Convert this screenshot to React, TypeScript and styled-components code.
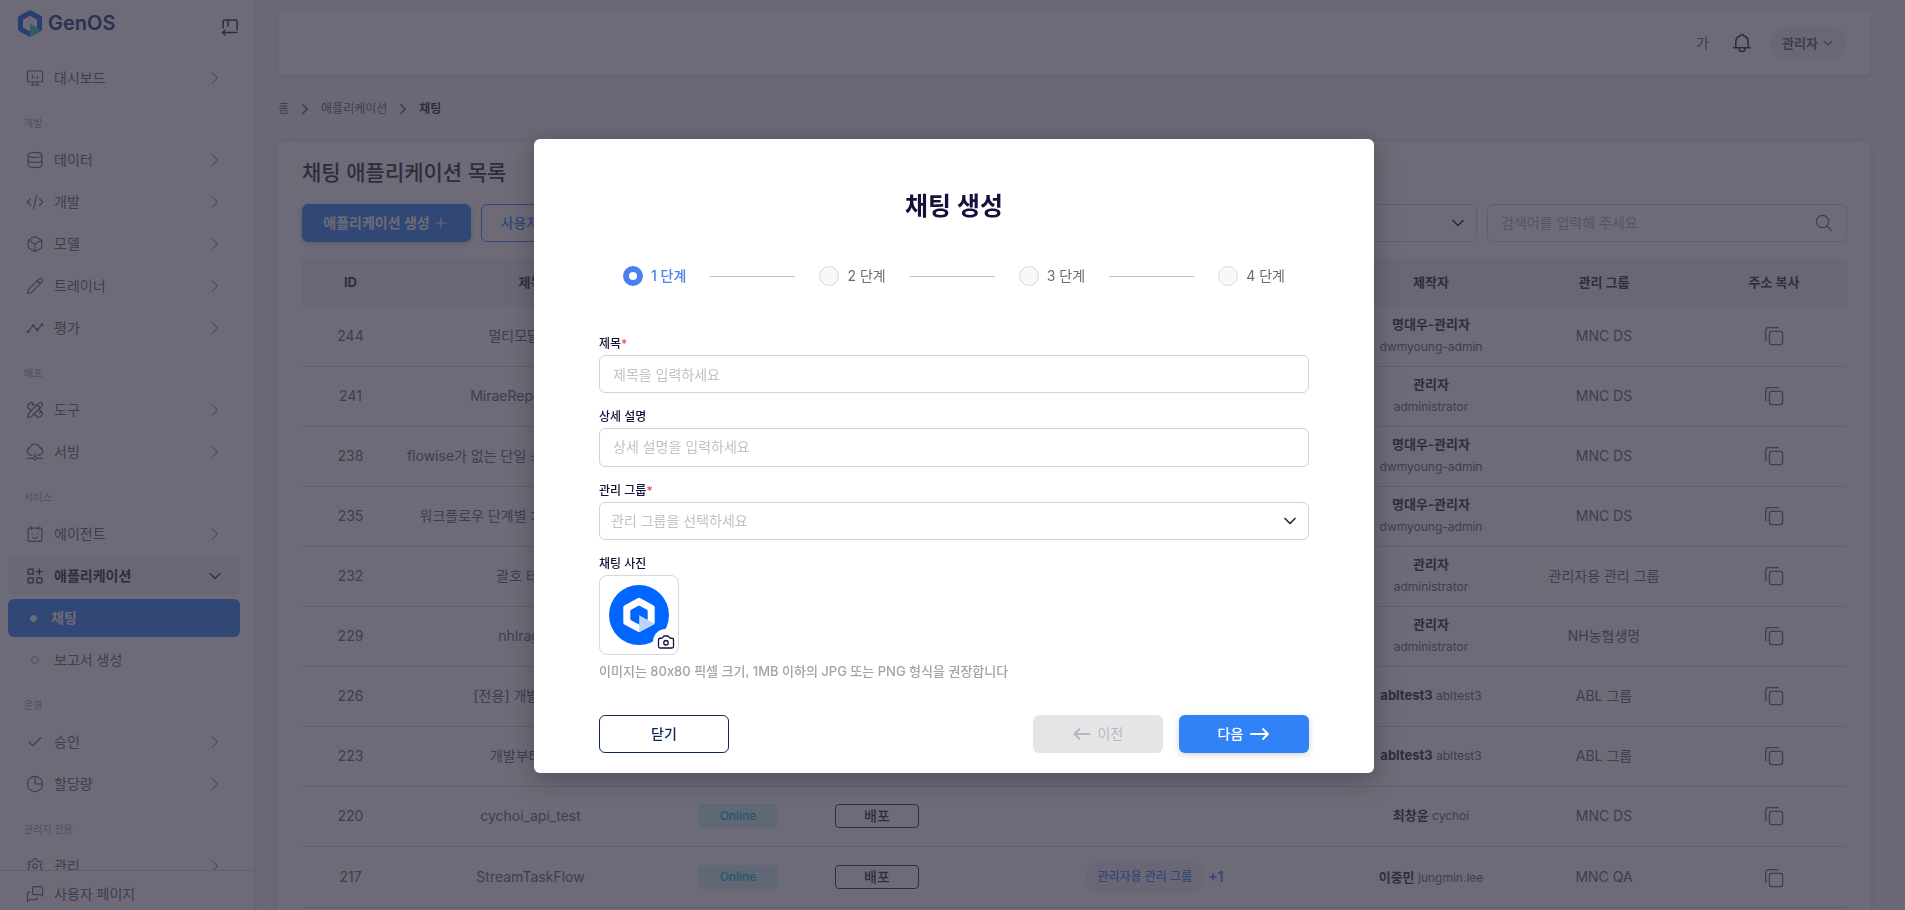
import React from "react";
import styled, { createGlobalStyle, css } from "styled-components";
import { Box, Camera, Check, ChevronDown, ChevronRight, Pencil, PencilRuler, Plus, Settings } from "lucide-react";

const color = {
  page: "#f6f5f8",
  surface: "#ffffff",
  text: "#63616f",
  strong: "#2b283c",
  muted: "#a09eab",
  line: "#d9d8dd",
  blue: "#3182f6",
  navy: "#14123a",
};

const GlobalStyle = createGlobalStyle`
  *, *::before, *::after { box-sizing: border-box; }
  body {
    margin: 0;
    background: ${color.page};
    color: ${color.text};
    font-family: Inter, "Noto Sans CJK KR", sans-serif;
    font-size: 14px;
    line-height: 20px;
  }
  button, input, select, textarea { font: inherit; color: inherit; margin: 0; }
  h1, h2, p, ul { margin: 0; padding: 0; }
  a { color: inherit; text-decoration: none; }
`;

/* ---------- shell ---------- */

const Shell = styled.div`
  display: flex;
  height: 100vh;
  overflow: hidden;
`;

const Sidebar = styled.aside`
  flex: 0 0 254px;
  display: flex;
  flex-direction: column;
  background: ${color.surface};
  box-shadow: 0 2px 6px rgba(47, 43, 61, 0.16);
`;

const Brand = styled.div`
  display: flex;
  align-items: flex-start;
  justify-content: space-between;
  height: 59px;
  flex: none;
  padding: 10px 15px 0 18px;
`;

const BrandLink = styled.a`
  display: flex;
  align-items: center;
  gap: 6px;
  font-size: 20px;
  line-height: 27px;
  font-weight: 600;
  color: #1d3766;
`;

const IconButton = styled.button`
  display: inline-flex;
  align-items: center;
  justify-content: center;
  padding: 0;
  border: 0;
  background: none;
  vertical-align: middle;
  cursor: pointer;
`;

const CollapseButton = styled(IconButton)`
  width: 18px;
  height: 18px;
  margin-top: 8px;
  color: ${color.strong};
`;

const Nav = styled.nav`
  flex: 1;
  min-height: 0;
  overflow: hidden;
  padding: 0 14px 0 8px;
`;

const NavList = styled.ul`
  display: flex;
  flex-direction: column;
  gap: 4px;
  list-style: none;
`;

const SectionLabel = styled.p`
  height: 44px;
  padding: 16px 16px 0;
  font-size: 10px;
  line-height: 20px;
  color: ${color.muted};
`;

const NavLink = styled.a<{ $state?: "open" | "current" }>`
  display: flex;
  align-items: center;
  height: 38px;
  padding: 0 15px 0 18px;
  border-radius: 6px;
  ${(p) => p.$state === "open" && css`
    background: #f1f1f3;
    color: ${color.strong};
    font-weight: 600;
  `}
  ${(p) => p.$state === "current" && css`
    background: ${color.blue};
    color: #fff;
    font-weight: 600;
  `}
`;

const NavIcon = styled.span<{ $tight?: boolean }>`
  display: inline-flex;
  justify-content: center;
  width: 18px;
  margin-right: ${(p) => (p.$tight ? "7px" : "10px")};
`;

const NavText = styled.span`
  flex: 1;
`;

const Bullet = styled.span<{ $filled?: boolean }>`
  width: ${(p) => (p.$filled ? "7px" : "8px")};
  height: ${(p) => (p.$filled ? "7px" : "8px")};
  margin-right: ${(p) => (p.$filled ? "3px" : "0")};
  border-radius: 50%;
  border: 1px solid ${(p) => (p.$filled ? "#fff" : color.muted)};
  background: ${(p) => (p.$filled ? "#fff" : "none")};
`;

const SidebarFooter = styled.div`
  flex: none;
  height: 40px;
  padding: 4px 14px 0 8px;
  border-top: 1px solid ${color.line};
`;

const Main = styled.main`
  flex: 1;
  min-width: 0;
  padding: 11px 34px 0 24px;
  display: flex;
  flex-direction: column;
`;

const TopBar = styled.header`
  flex: none;
  display: flex;
  align-items: center;
  justify-content: flex-end;
  height: 64px;
  padding: 0 24px;
  border-radius: 6px;
  background: ${color.surface};
  box-shadow: 0 2px 6px rgba(47, 43, 61, 0.12);
`;

const LanguageButton = styled(IconButton)`
  color: ${color.text};
  margin-right: 23px;
`;

const BellButton = styled(IconButton)`
  color: #1b2a5c;
  margin-right: 18px;
`;

const UserButton = styled.button`
  display: flex;
  align-items: center;
  justify-content: space-between;
  width: 77px;
  height: 32px;
  padding: 0 11px 0 12px;
  border: 0;
  border-radius: 16px;
  background: #f1f1f3;
  font-size: 13px;
  font-weight: 600;
  color: ${color.text};
`;

const Breadcrumb = styled.nav`
  flex: none;
  display: flex;
  align-items: center;
  gap: 7px;
  height: 67px;
  font-size: 12px;
  b { color: ${color.strong}; font-weight: 700; }
`;

const Panel = styled.section`
  flex: none;
  padding: 16px 24px 40px;
  border-radius: 6px;
  background: ${color.surface};
  box-shadow: 0 3px 12px rgba(47, 43, 61, 0.12);
`;

const PanelTitle = styled.h1`
  font-size: 21px;
  line-height: 30px;
  font-weight: 500;
  color: ${color.strong};
`;

const Toolbar = styled.div`
  display: flex;
  align-items: flex-start;
  gap: 10px;
  margin: 16px 0;
`;

const ToolbarButton = styled.button<{ $outline?: boolean }>`
  display: flex;
  align-items: center;
  justify-content: center;
  height: 38px;
  min-width: ${(p) => (p.$outline ? "150px" : "169px")};
  border-radius: 6px;
  border: 1px solid ${color.blue};
  background: ${(p) => (p.$outline ? "transparent" : color.blue)};
  color: ${(p) => (p.$outline ? color.blue : "#fff")};
  font-weight: ${(p) => (p.$outline ? 500 : 700)};
  box-shadow: ${(p) => (p.$outline ? "none" : "0 2px 6px rgba(47, 43, 61, 0.3)")};
  gap: 2px;
`;

const SelectBox = styled.div<{ $width?: string }>`
  position: relative;
  width: ${(p) => p.$width ?? "100%"};
  > svg {
    position: absolute;
    right: 9px;
    top: 9px;
    pointer-events: none;
    color: ${color.strong};
  }
`;

const Select = styled.select`
  display: block;
  appearance: none;
  width: 100%;
  height: 38px;
  padding: 0 32px 0 11px;
  border: 1px solid #d3d3d6;
  border-radius: 6px;
  background: transparent;
  color: #c2c1c8;
`;

const SearchBox = styled.form`
  display: flex;
  align-items: center;
  width: 360px;
  height: 38px;
  padding: 0 13px;
  border: 1px solid #d3d3d6;
  border-radius: 6px;
`;

const SearchInput = styled.input`
  flex: 1;
  min-width: 0;
  border: 0;
  padding: 0;
  background: none;
  outline: none;
  &::placeholder { color: #b1b0b9; opacity: 1; }
`;

const Spacer = styled.div`
  flex: 1;
`;

/* ---------- table ---------- */

const Table = styled.table`
  width: 100%;
  margin-top: 17px;
  table-layout: fixed;
  border-collapse: separate;
  border-spacing: 0;
  text-align: center;
  th {
    height: 48px;
    padding: 0 0 2px;
    background: #f1f1f4;
    font-size: 13px;
    font-weight: 700;
    color: ${color.strong};
  }
  td {
    height: 60px;
    padding: 0 0 2px;
    border-bottom: 1px solid ${color.line};
    white-space: nowrap;
  }
  tr:last-child td { height: 61px; padding: 0; }
`;

const Person = styled.div`
  padding: 0 23px;
  line-height: 22px;
  font-size: 12px;
  white-space: normal;
  b { font-size: 13px; font-weight: 700; color: ${color.strong}; white-space: nowrap; }
  span { white-space: nowrap; }
`;

const StatusBadge = styled.span`
  display: inline-block;
  width: 80px;
  border-radius: 4px;
  background: #d2f1f8;
  color: #04b9d2;
  font-size: 12px;
  line-height: 24px;
  font-weight: 500;
  vertical-align: middle;
`;

const DeployButton = styled.button`
  width: 84px;
  height: 24px;
  padding: 0;
  line-height: 20px;
  border: 1px solid ${color.strong};
  border-radius: 4px;
  background: none;
  color: ${color.strong};
  font-weight: 500;
  vertical-align: middle;
`;

const GroupCell = styled.div`
  display: flex;
  align-items: center;
  justify-content: center;
  gap: 4px;
  padding-left: 14px;
  color: ${color.blue};
  b { font-weight: 600; }
`;

const GroupChip = styled.span`
  padding: 0 12px;
  border-radius: 16px;
  background: #eff0f6;
  font-size: 12px;
  line-height: 32px;
  font-weight: 500;
`;

/* ---------- dialog ---------- */

const Backdrop = styled.div`
  position: fixed;
  inset: 0;
  display: flex;
  align-items: center;
  justify-content: center;
  padding: 2px 0 0 3px;
  background: rgba(50, 46, 64, 0.71);
`;

const Dialog = styled.form`
  width: 840px;
  max-width: 100%;
  padding: 49px 65px 20px;
  border-radius: 6px;
  background: #fff;
  box-shadow: 0 6px 26px rgba(20, 16, 34, 0.32);
`;

const DialogTitle = styled.h2`
  font-size: 25px;
  line-height: 36px;
  font-weight: 700;
  text-align: center;
  color: ${color.navy};
`;

const Steps = styled.ol`
  display: flex;
  align-items: center;
  gap: 24px;
  margin: 42px 0 49px;
  padding: 0 24px;
  list-style: none;
`;

const Step = styled.li<{ $active?: boolean }>`
  display: flex;
  align-items: center;
  gap: 8px;
  color: ${(p) => (p.$active ? "#4880ee" : "#6d6b77")};
  font-weight: ${(p) => (p.$active ? 500 : 400)};
  white-space: nowrap;
  &::before {
    content: "";
    width: 20px;
    height: 20px;
    border-radius: 50%;
    background: ${(p) => (p.$active ? "#fff" : "#f7f8fa")};
    border: ${(p) => (p.$active ? "6px solid #4880ee" : "1px solid #d3d8de")};
  }
`;

const StepLine = styled.li`
  flex: 1;
  height: 1px;
  background: #bdbdc0;
`;

const Fields = styled.div`
  display: flex;
  flex-direction: column;
  gap: 15px;
`;

const Field = styled.div`
  display: flex;
  flex-direction: column;
  gap: 2px;
`;

const Label = styled.label`
  font-size: 12px;
  line-height: 18px;
  font-weight: 500;
  color: ${color.navy};
  span { color: #ee4b4e; }
`;

const inputStyle = css`
  display: block;
  width: 100%;
  border: 1px solid #d3d3d6;
  border-radius: 6px;
  background: #fff;
  outline: none;
  color: ${color.strong};
  &::placeholder { color: #c2c1c8; opacity: 1; }
`;

const TextInput = styled.input`
  ${inputStyle}
  height: 38px;
  padding: 0 13px;
`;

const TextArea = styled.textarea`
  ${inputStyle}
  height: 39px;
  padding: 8px 13px;
  resize: none;
  overflow: hidden;
`;

const PhotoButton = styled.button`
  position: relative;
  display: flex;
  align-items: center;
  justify-content: center;
  width: 80px;
  height: 80px;
  padding: 0;
  border: 1px solid #d9d9dc;
  border-radius: 8px;
  background: #fff;
`;

const CameraBadge = styled.span`
  position: absolute;
  right: 0;
  bottom: 0;
  display: flex;
  align-items: center;
  justify-content: center;
  width: 25px;
  height: 25px;
  border-radius: 50%;
  background: #fff;
  color: ${color.navy};
`;

const Hint = styled.p`
  font-size: 13px;
  line-height: 20px;
  margin: 6px 0 34px;
  font-weight: 500;
  color: #a3a2ab;
`;

const Actions = styled.div`
  display: flex;
  gap: 16px;
`;

const ActionButton = styled.button<{ $kind: "outline" | "muted" | "primary" }>`
  display: flex;
  align-items: center;
  justify-content: center;
  gap: 7px;
  width: 130px;
  height: 38px;
  padding: 0;
  border-radius: 6px;
  font-weight: 500;
  ${(p) => p.$kind === "outline" && css`
    border: 1px solid #0c2a52;
    background: #fff;
    color: #0c2a52;
    margin-right: auto;
  `}
  ${(p) => p.$kind === "muted" && css`
    border: 0;
    background: #e5e5e7;
    color: #b7b6bc;
    font-weight: 400;
  `}
  ${(p) => p.$kind === "primary" && css`
    border: 0;
    background: ${color.blue};
    color: #fff;
    box-shadow: 0 2px 6px rgba(47, 43, 61, 0.2);
  `}
`;

/* ---------- drawings ---------- */

const Glyph = ({ children, size = 20, width = 1.3 }: { children: React.ReactNode; size?: number; width?: number }) => (
  <svg width={size} height={size} viewBox="0 0 20 20" fill="none" stroke="currentColor" strokeWidth={width} strokeLinecap="round" strokeLinejoin="round" aria-hidden="true">
    {children}
  </svg>
);

const MonitorGlyph = () => (
  <Glyph>
    <rect x="1.6" y="2.2" width="16.8" height="12.2" rx="1.4" />
    <path d="M7.6 14.6v3M12.4 14.6v3M5.6 17.8h8.8M7.2 6.6v3.6M10 9.4v.8M12.8 8.4v1.8" />
  </Glyph>
);
const DatabaseGlyph = () => (
  <Glyph>
    <ellipse cx="10" cy="4.4" rx="7.6" ry="2.8" />
    <path d="M2.4 4.4v11.2c0 1.6 3.4 2.8 7.6 2.8s7.6-1.2 7.6-2.8V4.4M2.4 10c0 1.6 3.4 2.8 7.6 2.8s7.6-1.2 7.6-2.8" />
  </Glyph>
);
const CodeGlyph = () => (
  <Glyph>
    <path d="M5.2 6.2 1.4 10l3.8 3.8M14.8 6.2l3.8 3.8-3.8 3.8M11.8 2.8 8.4 17.4" />
  </Glyph>
);
const TrendGlyph = () => (
  <Glyph>
    <path d="M2.4 14 8 7.4l4.6 4.8 5.2-6" />
    <g fill="currentColor" stroke="none">
      <circle cx="2.4" cy="14" r="1.6" />
      <circle cx="8" cy="7.4" r="1.6" />
      <circle cx="12.6" cy="12.2" r="1.6" />
      <circle cx="17.8" cy="6.2" r="1.6" />
    </g>
  </Glyph>
);
const CloudGlyph = () => (
  <Glyph>
    <path d="M5 13.4a4.2 4.2 0 0 1-.4-8.2 5.6 5.6 0 0 1 10.8 0 4.2 4.2 0 0 1-.4 8.2h-2M5 13.4h2M10 11.6v3M1.600 17h6.6M11.8 17h6.6" />
    <circle cx="10" cy="17" r="1.7" />
  </Glyph>
);
const AgentGlyph = () => (
  <Glyph>
    <rect x="2.4" y="3.4" width="15.2" height="14.8" rx="1.2" />
    <path d="M6.2 1.4v3.8M13.8 1.4v3.8M7.4 13.6c1.4 1.2 3.8 1.2 5.2 0M7 9.2v.6M13 9.2v.6" />
  </Glyph>
);
const AppsGlyph = () => (
  <Glyph width={1.4}>
    <rect x="2.4" y="2.4" width="5.6" height="5.6" rx=".6" />
    <rect x="2.4" y="12" width="5.6" height="5.6" rx=".6" />
    <rect x="12" y="12" width="5.6" height="5.6" rx=".6" />
    <path d="M14.8 2v6.4M11.6 5.2H18" />
  </Glyph>
);
const PieGlyph = () => (
  <Glyph>
    <circle cx="10" cy="10" r="8.4" />
    <path d="M10 1.6V10h8.4" />
  </Glyph>
);
const BubblesGlyph = () => (
  <Glyph>
    <path d="M8.6 1.8h8.6c.8 0 1.2.4 1.2 1.2v9.4l-2.4-1.8H8.6c-.8 0-1.2-.4-1.2-1.2V3c0-.8.4-1.2 1.2-1.2z" />
    <path d="M4.6 8H2.8c-.8 0-1.2.4-1.2 1.2v9.2L4 16.2h7.2c.8 0 1.2-.4 1.2-1.2v-1" />
  </Glyph>
);
const CopyGlyph = () => (
  <Glyph width={1.3}>
    <rect x="5.400" y="5.400" width="13.200" height="13.200" rx="2.400" />
    <path d="M1.700 14.400V4.200a2.500 2.500 0 0 1 2.500-2.500h10.200" />
  </Glyph>
);
const CollapseGlyph = () => (
  <Glyph size={18} width={1.7}>
    <path d="M2.4 11V3.6c0-.8.5-1.4 1.4-1.4h12.6c.9 0 1.4.6 1.4 1.4V13M8 2.2V9M17.8 16.2H2M4.4 13.6 1.8 16.2l2.6 2.6" />
  </Glyph>
);
const BellGlyph = () => (
  <Glyph size={20} width={1.5}>
    <path d="M1.8 14.8h16.4M3.8 14.6V9.2c0-3.4 1.8-5.6 4.4-6.2.2-1 .8-1.6 1.8-1.6s1.600.6 1.800 1.600c2.6.6 4.4 2.8 4.4 6.2v5.4M7 15v.8c0 1.6 1.4 2.8 3 2.8s3-1.2 3-2.8V15" />
  </Glyph>
);
const SearchGlyph = () => (
  <Glyph size={18} width={1.3}>
    <circle cx="8.4" cy="8.4" r="6.8" />
    <path d="m13.4 13.4 5 5" />
  </Glyph>
);
const ArrowGlyph = ({ left }: { left?: boolean }) => (
  <svg width={left ? 18 : 20} height="14" viewBox={left ? "0 0 18 14" : "0 0 20 14"} fill="none" stroke="currentColor" strokeWidth="1.8" strokeLinecap="round" strokeLinejoin="round" aria-hidden="true">
    {left ? <path d="M16.500 7H1.500M6.500 2l-5 5 5 5" /> : <path d="M1 7h17M13 2l5 5-5 5" />}
  </svg>
);
const LogoMark = () => (
  <svg width="24" height="27" viewBox="0 0 24 27" aria-hidden="true">
    <path fill="#1d63f0" fillRule="evenodd" d="M10.8.4a2.4 2.4 0 0 1 2.4 0l9.6 5.4A2.4 2.4 0 0 1 24 7.9v11.2a2.4 2.4 0 0 1-1.2 2.1l-9.6 5.4a2.4 2.4 0 0 1-2.4 0l-9.6-5.4A2.4 2.4 0 0 1 0 19.1V7.9a2.4 2.4 0 0 1 1.2-2.1zM12 5.8 5 9.7v7.8l7 4 7-4V9.7z" />
    <path fill="#42c3c4" d="M12 13.6 23.4 20.6 12 27z" />
  </svg>
);
const AvatarMark = () => (
  <svg width="60" height="60" viewBox="0 0 60 60" aria-hidden="true">
    <circle cx="30" cy="30" r="30" fill="#0066ff" />
    <path fill="#fff" fillRule="evenodd" d="M29 13.1a2 2 0 0 1 2 0l13.700 7.500a2 2 0 0 1 1 1.700v15.400a2 2 0 0 1-1 1.700L31 46.800a2 2 0 0 1-2 0l-13.700-7.400a2 2 0 0 1-1-1.700V22.300a2 2 0 0 1 1-1.700zM29 20.900l-7 3.900a1.400 1.400 0 0 0-.7 1.200v8a1.400 1.400 0 0 0 .7 1.200l7 3.900a2 2 0 0 0 2 0l7-3.900a1.400 1.400 0 0 0 .7-1.200v-8a1.400 1.400 0 0 0-.7-1.200l-7-3.900a2 2 0 0 0-2 0z" />
    <path fill="#bdd4ff" d="M30.200 30.200 45.400 38.600 30.200 47z" />
  </svg>
);

/* ---------- data ---------- */

type Item = { label: string; icon?: React.ReactNode; state?: "open" | "current"; sub?: boolean };
type Section = { title?: string; items: Item[] };

const sections: Section[] = [
  { items: [{ label: "대시보드", icon: <MonitorGlyph /> }] },
  {
    title: "개발",
    items: [
      { label: "데이터", icon: <DatabaseGlyph /> },
      { label: "개발", icon: <CodeGlyph /> },
      { label: "모델", icon: <Box size={20} strokeWidth={1.5} /> },
      { label: "트레이너", icon: <Pencil size={18} strokeWidth={1.6} /> },
      { label: "평가", icon: <TrendGlyph /> },
    ],
  },
  {
    title: "배포",
    items: [
      { label: "도구", icon: <PencilRuler size={20} strokeWidth={1.6} /> },
      { label: "서빙", icon: <CloudGlyph /> },
    ],
  },
  {
    title: "서비스",
    items: [
      { label: "에이전트", icon: <AgentGlyph /> },
      { label: "애플리케이션", icon: <AppsGlyph />, state: "open" },
      { label: "채팅", state: "current", sub: true },
      { label: "보고서 생성", sub: true },
    ],
  },
  {
    title: "운영",
    items: [
      { label: "승인", icon: <Check size={22} strokeWidth={1.5} /> },
      { label: "할당량", icon: <PieGlyph /> },
    ],
  },
  { title: "관리자 전용", items: [{ label: "관리", icon: <Settings size={20} strokeWidth={1.5} /> }] },
];

type Row = { id: number; title: string; name: string; account: string; group: string; shared?: string; more?: string };

const rows: Row[] = [
  { id: 244, title: "멀티모달 RAG", name: "명대우-관리자", account: "dwmyoung-admin", group: "MNC DS" },
  { id: 241, title: "MiraeReportAgent", name: "관리자", account: "administrator", group: "MNC DS" },
  { id: 238, title: "flowise가 없는 단일 스텝 워크플로우 채팅", name: "명대우-관리자", account: "dwmyoung-admin", group: "MNC DS" },
  { id: 235, title: "워크플로우 단계별 처리 과정 테스트용", name: "명대우-관리자", account: "dwmyoung-admin", group: "MNC DS" },
  { id: 232, title: "괄호 테스트", name: "관리자", account: "administrator", group: "관리자용 관리 그룹" },
  { id: 229, title: "nhlrag_qa", name: "관리자", account: "administrator", group: "NH농협생명" },
  { id: 226, title: "[전용] 개발용 채팅1", name: "abltest3", account: "abltest3", group: "ABL 그룹" },
  { id: 223, title: "개발부터 배포", name: "abltest3", account: "abltest3", group: "ABL 그룹" },
  { id: 220, title: "cychoi_api_test", name: "최창윤", account: "cychoi", group: "MNC DS" },
  { id: 217, title: "StreamTaskFlow", name: "이중민", account: "jungmin.lee", group: "MNC QA", shared: "관리자용 관리 그룹", more: "+1" },
];

const columns = [
  { title: "ID", width: 97 },
  { title: "제목", width: 263 },
  { title: "상태", width: 152 },
  { title: "배포", width: 126 },
  { title: "공유 그룹", width: 415 },
  { title: "제작자", width: 152 },
  { title: "관리 그룹", width: 194 },
  { title: "주소 복사", width: 146 },
];

const steps = ["1 단계", "2 단계", "3 단계", "4 단계"];

const MenuItem = ({ item }: { item: Item }) => (
  <li>
    <NavLink href="#" $state={item.state}>
      <NavIcon $tight={item.sub && item.state === "current"}>
        {item.sub ? <Bullet $filled={item.state === "current"} /> : item.icon}
      </NavIcon>
      <NavText>{item.label}</NavText>
      {!item.sub && (item.state === "open"
        ? <ChevronDown size={20} strokeWidth={1.5} />
        : <ChevronRight size={20} strokeWidth={1.2} />)}
    </NavLink>
  </li>
);

const CreateChatDialog = () => (
  <Backdrop>
    <Dialog role="dialog" aria-modal="true" aria-labelledby="dialog-title" onSubmit={(e) => e.preventDefault()}>
      <DialogTitle id="dialog-title">채팅 생성</DialogTitle>
      <Steps>
        {steps.map((step, i) => (
          <React.Fragment key={step}>
            {i > 0 && <StepLine aria-hidden="true" />}
            <Step $active={i === 0}>{step}</Step>
          </React.Fragment>
        ))}
      </Steps>
      <Fields>
        <Field>
          <Label htmlFor="chat-title">제목<span>*</span></Label>
          <TextInput id="chat-title" placeholder="제목을 입력하세요" />
        </Field>
        <Field>
          <Label htmlFor="chat-description">상세 설명</Label>
          <TextArea id="chat-description" rows={1} placeholder="상세 설명을 입력하세요" />
        </Field>
        <Field>
          <Label htmlFor="chat-group">관리 그룹<span>*</span></Label>
          <SelectBox>
            <Select id="chat-group" defaultValue="">
              <option value="">관리 그룹을 선택하세요</option>
            </Select>
            <ChevronDown size={20} strokeWidth={2} />
          </SelectBox>
        </Field>
        <Field>
          <Label htmlFor="chat-photo">채팅 사진</Label>
          <PhotoButton id="chat-photo" type="button">
            <AvatarMark />
            <CameraBadge><Camera size={18} strokeWidth={1.7} /></CameraBadge>
          </PhotoButton>
        </Field>
      </Fields>
      <Hint>이미지는 80x80 픽셀 크기, 1MB 이하의 JPG 또는 PNG 형식을 권장합니다</Hint>
      <Actions>
        <ActionButton type="button" $kind="outline">닫기</ActionButton>
        <ActionButton type="button" $kind="muted" disabled><ArrowGlyph left />이전</ActionButton>
        <ActionButton type="submit" $kind="primary">다음<ArrowGlyph /></ActionButton>
      </Actions>
    </Dialog>
  </Backdrop>
);

export default function App() {
  return (
    <>
      <GlobalStyle />
      <Shell>
        <Sidebar>
          <Brand>
            <BrandLink href="#"><LogoMark />GenOS</BrandLink>
            <CollapseButton aria-label="메뉴 접기"><CollapseGlyph /></CollapseButton>
          </Brand>
          <Nav>
            {sections.map((section, i) => (
              <React.Fragment key={i}>
                {section.title && <SectionLabel>{section.title}</SectionLabel>}
                <NavList>
                  {section.items.map((item) => <MenuItem key={item.label} item={item} />)}
                </NavList>
              </React.Fragment>
            ))}
          </Nav>
          <SidebarFooter>
            <NavLink href="#">
              <NavIcon><BubblesGlyph /></NavIcon>
              <NavText>사용자 페이지</NavText>
            </NavLink>
          </SidebarFooter>
        </Sidebar>
        <Main>
          <TopBar>
            <LanguageButton aria-label="언어">가</LanguageButton>
            <BellButton aria-label="알림"><BellGlyph /></BellButton>
            <UserButton>관리자<ChevronDown size={16} strokeWidth={1.6} /></UserButton>
          </TopBar>
          <Breadcrumb aria-label="경로">
            <a href="#">홈</a>
            <ChevronRight size={18} strokeWidth={2.2} />
            <a href="#">애플리케이션</a>
            <ChevronRight size={18} strokeWidth={2.2} />
            <b>채팅</b>
          </Breadcrumb>
          <Panel>
            <PanelTitle>채팅 애플리케이션 목록</PanelTitle>
            <Toolbar>
              <ToolbarButton>애플리케이션 생성<Plus size={18} strokeWidth={1.4} /></ToolbarButton>
              <ToolbarButton $outline>사용자 페이지 이동</ToolbarButton>
              <Spacer />
              <SelectBox $width="240px">
                <Select aria-label="그룹 필터" defaultValue=""><option value="">전체</option></Select>
                <ChevronDown size={20} strokeWidth={2} />
              </SelectBox>
              <SearchBox role="search">
                <SearchInput aria-label="검색" placeholder="검색어를 입력해 주세요" />
                <SearchGlyph />
              </SearchBox>
            </Toolbar>
            <Table>
              <colgroup>
                {columns.map((c) => <col key={c.title} width={c.width} />)}
              </colgroup>
              <thead>
                <tr>{columns.map((c) => <th key={c.title} scope="col">{c.title}</th>)}</tr>
              </thead>
              <tbody>
                {rows.map((row) => (
                  <tr key={row.id}>
                    <td>{row.id}</td>
                    <td>{row.title}</td>
                    <td><StatusBadge>Online</StatusBadge></td>
                    <td><DeployButton>배포</DeployButton></td>
                    <td>{row.shared && <GroupCell><GroupChip>{row.shared}</GroupChip><b>{row.more}</b></GroupCell>}</td>
                    <td><Person><b>{row.name}</b> <span>{row.account}</span></Person></td>
                    <td>{row.group}</td>
                    <td><IconButton aria-label="주소 복사"><CopyGlyph /></IconButton></td>
                  </tr>
                ))}
              </tbody>
            </Table>
          </Panel>
        </Main>
      </Shell>
      <CreateChatDialog />
    </>
  );
}
